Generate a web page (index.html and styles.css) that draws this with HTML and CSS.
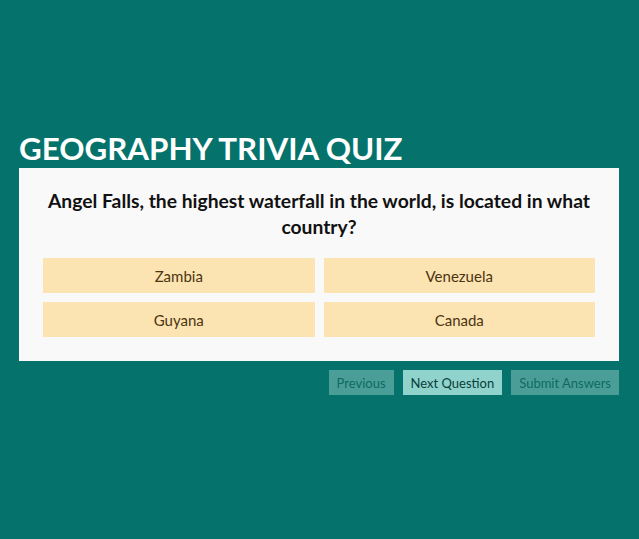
FILE: index.html
```html
<!DOCTYPE html>
<html lang="en">
<head>
<meta charset="utf-8">
<title>Geography Trivia Quiz</title>
<link rel="stylesheet" href="styles.css">
</head>
<body>
<main class="quiz">
  <h1 class="quiz-title">GEOGRAPHY TRIVIA QUIZ</h1>
  <section class="card">
    <h2 class="question">Angel Falls, the highest waterfall in the world, is located in what country?</h2>
    <div class="options">
      <button class="option">Zambia</button>
      <button class="option">Venezuela</button>
      <button class="option">Guyana</button>
      <button class="option">Canada</button>
    </div>
  </section>
  <nav class="controls">
    <button class="ctrl ctrl-muted">Previous</button>
    <button class="ctrl ctrl-active">Next Question</button>
    <button class="ctrl ctrl-muted">Submit Answers</button>
  </nav>
</main>
</body>
</html>
```

FILE: styles.css
```css
* { box-sizing: border-box; }
html, body { margin: 0; }
body {
  background: #05736b;
  font-family: Lato, "Noto Sans", sans-serif;
  min-height: 539px;
}
.quiz {
  width: 600px;
  margin: 0 20px 0 auto;
  padding-top: 128px;
}
.quiz-title {
  margin: 0;
  color: #ffffff;
  font-size: 31.3px;
  font-weight: 700;
  line-height: 40px;
}
.card {
  background: #f9f9f9;
  padding: 20px 24px 24px;
}
.question {
  margin: 0 0 18px;
  text-align: center;
  font-size: 19.3px;
  line-height: 26px;
  font-weight: 700;
  color: #111;
}
.options {
  display: grid;
  grid-template-columns: 1fr 1fr;
  gap: 9px 9px;
}
.option {
  height: 35px;
  border: 0;
  background: #fce3b2;
  color: #4a3510;
  font-family: inherit;
  font-size: 15px;
  padding: 0;
}
.controls {
  display: flex;
  justify-content: flex-end;
  gap: 9px;
  margin-top: 9px;
}
.ctrl {
  height: 25px;
  border: 0;
  padding: 0 8px;
  font-family: inherit;
  font-size: 13px;
  color: #0b6a63;
}
.ctrl-muted { background: #4b9e97; }
.ctrl-active { background: #8fd3cc; color: #0a3d39; }
```
